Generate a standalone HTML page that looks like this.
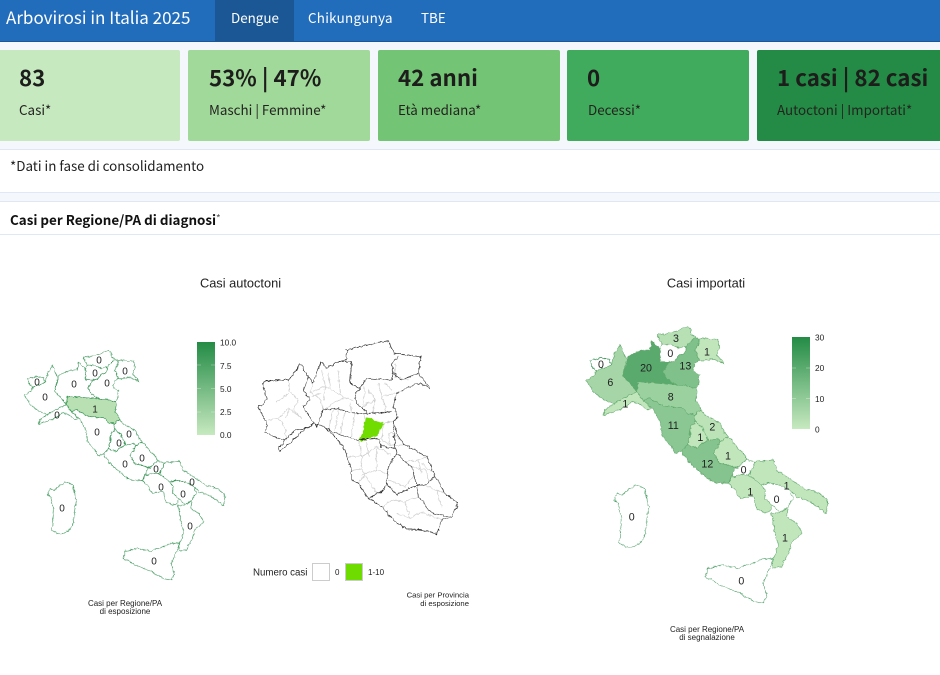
<!DOCTYPE html>
<html lang="it"><head><meta charset="utf-8"><title>Arbovirosi in Italia 2025</title>
<style>
html,body{margin:0;padding:0;width:940px;height:675px;overflow:hidden;background:#fff}
body{position:relative;font-family:"Noto Sans CJK JP","Liberation Sans",sans-serif;color:#1d1d1b}
.a{position:absolute;white-space:nowrap}
#hd{left:0;top:0;width:940px;height:41px;background:#216cbb;border-bottom:1px solid #1a5796}
#bg{left:0;top:42px;width:940px;height:160px;background:#f4f7fc}
#act{left:215px;top:0;width:79px;height:41px;background:#1b5795}
.nav{color:#fff;font-size:13.4px;line-height:20px;top:7px}
.card{top:50px;height:91px;border-radius:2px}
.v{top:62px;font-size:22.3px;font-weight:700;line-height:30px;color:#1d1d1b}
.l{top:99px;font-size:13.4px;line-height:20px;color:#24241f}
.panel{left:0;width:940px;background:#fff;box-sizing:border-box;border-top:1px solid #e1e7f0;border-bottom:1px solid #dfe9f5}
svg{position:absolute;left:0;top:0}
svg text{font-family:"Liberation Sans",Arial,sans-serif;fill:#222}
</style></head><body>
<div class="a" id="bg"></div>
<div class="a" id="hd"></div>
<div class="a" id="act"></div>
<div class="a" style="left:6px;top:4px;color:#fff;font-size:17px;line-height:25px">Arbovirosi in Italia 2025</div>
<div class="a nav" style="left:231px">Dengue</div>
<div class="a nav" style="left:308px;letter-spacing:.02em">Chikungunya</div>
<div class="a nav" style="left:421px">TBE</div>

<div class="a card" style="left:-4px;width:184px;background:#c7e9c0"></div>
<div class="a card" style="left:188px;width:182px;background:#a1d99b"></div>
<div class="a card" style="left:378px;width:182px;background:#74c476"></div>
<div class="a card" style="left:567px;width:182px;background:#41ab5d"></div>
<div class="a card" style="left:757px;width:190px;background:#238b45"></div>
<div class="a v" style="left:19px">83</div><div class="a l" style="left:19px">Casi*</div>
<div class="a v" style="left:209px">53% | 47%</div><div class="a l" style="left:209px">Maschi | Femmine*</div>
<div class="a v" style="left:398px">42 anni</div><div class="a l" style="left:398px">Età mediana*</div>
<div class="a v" style="left:587px">0</div><div class="a l" style="left:588px">Decessi*</div>
<div class="a v" style="left:777px">1 casi | 82 casi</div><div class="a l" style="left:777px">Autoctoni | Importati*</div>

<div class="a panel" style="top:149px;height:44px"></div>
<div class="a" style="left:10px;top:155px;font-size:13.4px;line-height:20px;color:#222">*Dati in fase di consolidamento</div>
<div class="a panel" style="top:201px;height:34px"></div>
<div class="a" style="left:10px;top:209px;font-size:13.4px;font-weight:700;line-height:20px;color:#111">Casi per Regione/PA di diagnosi<span style="font-weight:400;font-size:10px;color:#555;position:relative;top:-3px">*</span></div>

<svg width="940" height="675" viewBox="0 0 940 675" xmlns="http://www.w3.org/2000/svg">
<defs>
<filter id="w" x="-5%" y="-5%" width="110%" height="110%"><feTurbulence type="fractalNoise" baseFrequency=".085" numOctaves="2" seed="4" result="n"/><feDisplacementMap in="SourceGraphic" in2="n" scale="11" xChannelSelector="R" yChannelSelector="G" result="d"/><feGaussianBlur in="d" stdDeviation=".9"/></filter>
<filter id="b" x="-5%" y="-5%" width="110%" height="110%"><feGaussianBlur stdDeviation=".28"/></filter>
<linearGradient id="g" x1="0" y1="1" x2="0" y2="0"><stop offset="0" stop-color="#c7e9c0"/><stop offset="1" stop-color="#238b45"/></linearGradient>
<path id="vda" d="M30,122 L60,115 90,118 93,135 70,145 48,150 35,140Z"/>
<path id="pie" d="M20,182 45,165 48,150 70,145 93,135 105,100 120,75 130,100 140,115 128,165 150,190 170,215 150,225 130,235 105,250 85,245 65,235 40,215Z"/>
<path id="lig" d="M68,285 75,270 105,250 130,235 150,225 170,215 190,240 215,265 200,268 175,250 155,245 135,262 105,275Z"/>
<path id="lom" d="M128,165 145,110 160,100 190,90 210,90 215,63 240,85 240,125 270,125 248,155 255,170 290,195 230,190 175,185 170,215 150,190Z"/>
<path id="aa" d="M232,45 275,38 325,18 335,40 345,52 318,78 300,85 275,75 245,72 238,60Z"/>
<path id="tn" d="M240,85 245,72 275,75 300,85 318,78 315,100 295,108 280,125 240,125Z"/>
<path id="ven" d="M248,155 270,125 280,125 295,108 315,100 318,78 345,52 360,55 345,95 360,120 345,130 340,155 360,165 355,190 350,205 310,195 290,195 255,170Z"/>
<path id="fvg" d="M345,95 360,55 415,58 418,85 410,105 425,120 433,135 420,125 400,118 375,120 360,120Z"/>
<path id="emi" d="M170,215 175,185 230,190 290,195 310,195 350,205 348,240 362,268 345,285 320,280 310,262 285,262 250,258 225,245 210,235 190,240Z"/>
<path id="tos" d="M190,240 210,235 225,245 250,258 285,262 310,262 320,280 345,285 345,305 330,325 330,350 322,375 305,395 285,400 270,375 248,350 240,310 225,275 215,265Z"/>
<path id="mar" d="M345,285 362,268 375,285 420,310 432,335 445,350 420,365 410,355 385,362 365,320 345,305Z"/>
<path id="umb" d="M345,305 365,320 385,362 365,370 350,385 322,375 330,350 330,325Z"/>
<path id="abr" d="M420,365 445,350 465,375 495,405 500,420 470,445 445,435 420,430 400,400Z"/>
<path id="laz" d="M305,395 322,375 350,385 365,370 385,362 410,355 420,365 400,400 420,430 445,435 465,445 455,470 445,490 420,488 395,485 370,465 335,435Z"/>
<path id="mol" d="M465,445 470,445 500,420 525,425 515,450 505,465 480,465 455,470Z"/>
<path id="cam" d="M445,490 455,470 480,465 505,465 525,480 545,495 555,510 555,535 575,555 570,575 550,578 525,560 520,530 480,535 465,510Z"/>
<path id="pug" d="M515,450 525,425 580,420 590,450 635,480 680,510 720,520 745,545 738,580 720,565 690,545 650,530 630,510 600,495 565,490 545,495 525,480 505,465Z"/>
<path id="bas" d="M545,495 565,490 600,495 630,510 640,535 625,560 600,578 575,555 555,535 555,510Z"/>
<path id="cal" d="M575,580 600,578 625,565 620,590 650,610 668,640 635,665 630,690 605,740 580,745 575,725 595,680 585,640Z"/>
<path id="sic" d="M375,770 385,745 430,735 475,745 530,725 555,715 580,718 570,740 550,790 560,825 550,850 525,845 480,820 420,795Z"/>
<path id="sar" d="M103,540 110,518 125,525 165,495 195,505 205,560 195,650 180,670 150,685 118,670 125,600 115,550Z"/>
</defs>

<!-- left map -->
<g transform="translate(19.19 345.02) scale(.2767)" fill="#fff" stroke="#238b45" stroke-width="2.6" stroke-opacity=".8" filter="url(#w)">
<use href="#vda"/><use href="#pie"/><use href="#lig"/><use href="#lom"/><use href="#aa"/><use href="#tn"/><use href="#ven"/><use href="#fvg"/>
<use href="#emi" fill="#b8e0b2"/><use href="#tos"/><use href="#mar"/><use href="#umb"/><use href="#abr"/><use href="#laz"/><use href="#mol"/><use href="#cam"/><use href="#pug"/><use href="#bas"/><use href="#cal"/><use href="#sic"/><use href="#sar"/>
</g>
<g font-size="10" text-anchor="middle" filter="url(#b)">
<text x="99" y="363.500">0</text><text x="95" y="376.500">0</text><text x="125" y="374.500">0</text><text x="37" y="385.500">0</text><text x="74" y="387.500">0</text><text x="107" y="386.500">0</text><text x="45" y="400.500">0</text><text x="95" y="412.500">1</text><text x="57" y="418.500">0</text><text x="97" y="435.500">0</text><text x="129" y="437.500">0</text><text x="119" y="446.500">0</text><text x="142" y="461.500">0</text><text x="125" y="467.500">0</text><text x="156" y="472.500">0</text><text x="192" y="485.500">0</text><text x="161" y="490.500">0</text><text x="183" y="497.500">0</text><text x="62" y="511.500">0</text><text x="190" y="529.500">0</text><text x="154" y="564.500">0</text>
</g>
<rect x="197" y="342" width="18" height="93" fill="url(#g)"/>
<g stroke="#fff" stroke-width=".5" stroke-opacity=".6"><path d="M197,365H201M211,365H215M197,388.500H201M211,388.500H215M197,412H201M211,412H215"/></g>
<g font-size="8.300" filter="url(#b)"><text x="220" y="345.500">10.0</text><text x="220" y="369">7.5</text><text x="220" y="392">5.0</text><text x="220" y="415">2.5</text><text x="220" y="438">0.0</text></g>
<g font-size="8" text-anchor="middle" fill="#333" filter="url(#b)"><text x="125" y="606">Casi per Regione/PA</text><text x="125" y="614">di esposizione</text></g>
<text x="240.500" y="287.500" font-size="12.800" text-anchor="middle">Casi autoctoni</text>

<!-- province map -->
<g transform="translate(245 330) scale(.3333)" fill="none" filter="url(#w)">
<path d="M360,265 375,262 385,272 410,275 420,285 405,298 398,318 370,325 345,335 340,325 355,305Z" fill="#6fdc00"/>
<g stroke="#cfcfcf" stroke-width="2.200">
<path d="M130,150 135,185 160,210 145,240 170,265 130,235 100,265 70,270M130,190 95,215M100,265 120,295 125,330M135,235 120,265M205,160 195,185 230,210 235,240M230,120 240,170 235,210M240,170 280,190 300,205 325,210M280,120 285,190M235,240 270,215 300,205M205,185 240,170M320,250 315,220M250,130 255,175M200,200 230,190"/>
<path d="M370,180 390,210 385,250M390,210 350,230M400,160 410,200 450,190M410,200 425,245M450,100 450,140 490,150M360,170 355,225M420,160 440,180"/>
<path d="M265,240 250,300M300,245 285,315M330,250 320,320M360,250 358,265M420,278 445,275M420,278 410,325M280,240 270,300"/>
<path d="M340,330 350,380 305,380M350,380 350,420 395,490M350,420 320,420M350,380 395,350 440,375M395,350 395,420 350,435M395,420 425,430M340,460 360,435M365,335 370,380"/>
<path d="M405,325 435,345 430,310 455,310M435,345 480,345M445,310 470,335"/>
<path d="M480,395 520,390 545,380M500,410 545,420 550,455M520,390 530,430M430,450 480,470 505,440M530,400 560,425"/>
<path d="M540,465 575,480 590,530M575,480 600,490M440,510 480,515 495,565 455,550M495,565 530,545 590,570M480,515 520,500M440,510 410,530"/>
</g>
<g stroke="#2a2a2a" stroke-width="2" stroke-linejoin="round">
<path d="M40,232 52,225 65,205 52,155 100,150 130,150 150,125 165,100 190,140 205,160 228,95 245,115 280,95 305,90 305,60 345,50 430,32 445,68 480,75 528,80 520,130 540,155 555,175 525,160 490,170 455,190 445,230 458,262 445,275 460,320 480,345 545,380 570,440 600,490 640,520 620,560 590,570 575,612 530,600 490,598 455,580 410,530 370,505 340,460 320,450 320,420 300,360 270,320 235,290 205,280 170,305 140,335 105,365 100,355 120,330 60,310 65,280Z"/>
<path d="M190,140 175,180 195,210 175,230 200,270 215,290M120,330 150,300 185,295 205,280"/>
<path d="M215,290 235,240 280,235 320,250 370,250 440,245"/>
<path d="M280,95 320,95 315,160 345,175 365,145 440,150 445,130 440,100 460,80M445,130 470,150 520,130M345,175 330,190 335,220 370,250"/>
<path d="M235,290 270,310 340,330 400,325 410,350 450,355 445,275"/>
<path d="M450,355 455,370 430,410 425,460 455,495 515,465 500,410 480,395 455,370"/>
<path d="M515,465 540,465 570,440M515,465 520,500 560,550 620,560M370,505 410,485 425,460"/>
</g>
</g>
<rect x="312.500" y="563.500" width="17" height="17" fill="#fff" stroke="#ccc"/>
<rect x="345.500" y="563.500" width="17" height="17" fill="#6fdc00" stroke="#ccc"/>
<text x="253" y="575.500" font-size="9.700">Numero casi</text>
<text x="335" y="575" font-size="8">0</text><text x="368" y="575" font-size="8">1-10</text>
<g font-size="7.700" text-anchor="end" fill="#333" filter="url(#b)"><text x="469" y="597.500">Casi per Provincia</text><text x="469" y="606">di esposizione</text></g>

<!-- right map -->
<g transform="translate(580 320) scale(.3333)" stroke="#5fa86b" stroke-width="1.800" filter="url(#w)">
<use href="#vda" fill="#fff" stroke="#238b45"/><use href="#pie" fill="#a6d6a7"/><use href="#lig" fill="#c2e6bc"/><use href="#lom" fill="#5aaa6e"/><use href="#aa" fill="#b7e0b4"/><use href="#tn" fill="#fff"/><use href="#ven" fill="#80c08b"/><use href="#fvg" fill="#c2e6bc"/>
<use href="#emi" fill="#9bd09f"/><use href="#tos" fill="#8bc793"/><use href="#mar" fill="#bce3b8"/><use href="#umb" fill="#c2e6bc"/><use href="#abr" fill="#c2e6bc"/><use href="#laz" fill="#85c38f"/><use href="#mol" fill="#fff"/><use href="#cam" fill="#c2e6bc"/><use href="#pug" fill="#c2e6bc"/><use href="#bas" fill="#fff"/><use href="#cal" fill="#c2e6bc"/>
<use href="#sic" fill="#fff" stroke="#238b45" stroke-opacity=".8"/><use href="#sar" fill="#fff" stroke="#238b45" stroke-opacity=".8"/>
</g>
<g transform="translate(580 320) scale(.3333)" font-size="32" text-anchor="middle" filter="url(#b)">
<text x="288" y="66">3</text><text x="271" y="111">0</text><text x="381" y="106">1</text><text x="63" y="144">0</text><text x="198" y="154">20</text><text x="316" y="149">13</text><text x="91" y="198">6</text><text x="272" y="241">8</text><text x="136" y="263">1</text><text x="280" y="327">11</text><text x="397" y="331">2</text><text x="361" y="363">1</text><text x="444" y="419">1</text><text x="382" y="442">12</text><text x="491" y="461">0</text><text x="620" y="508">1</text><text x="511" y="526">1</text><text x="590" y="549">0</text><text x="155" y="601">0</text><text x="615" y="664">1</text><text x="484" y="793">0</text>
</g>
<rect x="792" y="337" width="18" height="92" fill="url(#g)"/>
<g stroke="#fff" stroke-width=".5" stroke-opacity=".6"><path d="M792,368H796M806,368H810M792,398.500H796M806,398.500H810"/></g>
<g font-size="8.300" filter="url(#b)"><text x="815" y="340.500">30</text><text x="815" y="371">20</text><text x="815" y="402">10</text><text x="815" y="432.500">0</text></g>
<g font-size="8" text-anchor="middle" fill="#333" filter="url(#b)"><text x="707" y="632">Casi per Regione/PA</text><text x="707" y="640">di segnalazione</text></g>
<text x="706" y="287.500" font-size="12.800" text-anchor="middle">Casi importati</text>
</svg>
</body></html>
